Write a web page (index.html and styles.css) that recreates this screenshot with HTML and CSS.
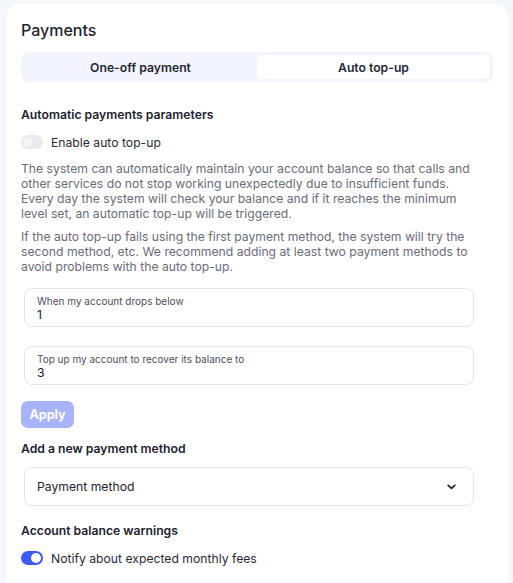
FILE: index.html
```html
<!DOCTYPE html>
<html lang="en">
<head>
<meta charset="utf-8">
<title>Payments</title>
<link rel="stylesheet" href="styles.css">
</head>
<body>
<div class="card">
  <h1 class="title">Payments</h1>
  <div class="tabs">
    <div class="tab">One-off payment</div>
    <div class="tab active">Auto top-up</div>
  </div>

  <h2 class="heading h-first">Automatic payments parameters</h2>
  <label class="toggle-row">
    <span class="toggle"><span class="knob"></span></span>
    <span>Enable auto top-up</span>
  </label>
  <p class="para p1">The system can automatically maintain your account balance so that calls and other services do not stop working unexpectedly due to insufficient funds. Every day the system will check your balance and if it reaches the minimum level set, an automatic top-up will be triggered.</p>
  <p class="para p2">If the auto top-up fails using the first payment method, the system will try the second method, etc. We recommend adding at least two payment methods to avoid problems with the auto top-up.</p>

  <div class="field f1">
    <div class="field-label">When my account drops below</div>
    <div class="field-value">1</div>
  </div>
  <div class="field f2">
    <div class="field-label">Top up my account to recover its balance to</div>
    <div class="field-value">3</div>
  </div>
  <button class="apply">Apply</button>

  <h2 class="heading h-method">Add a new payment method</h2>
  <div class="select">
    <span>Payment method</span>
    <svg class="chev" width="9" height="6" viewBox="0 0 9 6"><path d="M1.2 1.3 L4.5 4.4 L7.8 1.3" fill="none" stroke="#1f2030" stroke-width="1.7" stroke-linecap="round" stroke-linejoin="round"/></svg>
  </div>

  <h2 class="heading h-warn">Account balance warnings</h2>
  <label class="toggle-row">
    <span class="toggle on"><span class="knob"></span></span>
    <span>Notify about expected monthly fees</span>
  </label>
</div>
</body>
</html>
```

FILE: styles.css
```css
* { box-sizing: border-box; }
html, body { margin: 0; padding: 0; }
body {
  background: #f6f7fd;
  font-family: Inter, "Noto Sans", sans-serif;
  color: #23232f;
  height: 583px;
  overflow: hidden;
}
.card {
  background: #ffffff;
  margin: 4px 5px 0 6px;
  padding: 16px 15px 40px 15px;
  border-radius: 14px;
  min-height: 600px;
}
.title {
  margin: 0;
  font-size: 16px;
  line-height: 21px;
  font-weight: 500;
  color: #1f1f2b;
}
.tabs {
  margin-top: 11px;
  display: grid;
  grid-template-columns: 1fr 1fr;
  background: #f3f4fd;
  border-radius: 8px;
  padding: 3px;
  height: 30px;
}
.tab {
  display: flex;
  align-items: center;
  justify-content: center;
  font-size: 12.2px;
  font-weight: 600;
  color: #262633;
  border-radius: 6px;
}
.tab.active { background: #ffffff; }
.heading {
  margin: 0;
  font-size: 12.2px;
  line-height: 18px;
  font-weight: 600;
  color: #22222e;
}
.h-first { margin-top: 24px; }
.h-method { margin-top: 12px; }
.h-warn { margin-top: 16px; }
.toggle-row {
  display: flex;
  align-items: center;
  gap: 8px;
  height: 18px;
  margin-top: 9px;
  font-size: 12.2px;
  color: #2a2a36;
}
.toggle {
  width: 22px;
  height: 14px;
  border-radius: 7px;
  background: #e9e9ee;
  position: relative;
  flex: none;
}
.toggle .knob {
  position: absolute;
  top: 2px;
  left: 2px;
  width: 10px;
  height: 10px;
  border-radius: 50%;
  background: #f4f4f6;
}
.toggle.on { background: #3d5bf2; }
.toggle.on .knob { left: 10px; background: #ffffff; }
.para {
  margin: 0;
  max-width: 461px;
  font-size: 12.2px;
  line-height: 15px;
  color: #6c6b7a;
}
.p1 { margin-top: 10px; }
.p2 { margin-top: 8px; }
.field {
  width: 450px;
  margin-left: 3px;
  height: 39px;
  border: 1px solid #e6e6ea;
  border-radius: 8px;
  padding: 6px 12px 0 12px;
}
.f1 { margin-top: 14px; }
.f2 { margin-top: 19px; }
.field-label {
  font-size: 10px;
  line-height: 12px;
  color: #4e4e5c;
}
.field-value {
  font-size: 12.2px;
  line-height: 16px;
  color: #1a1a22;
}
.apply {
  display: block;
  margin-top: 16px;
  width: 53px;
  height: 27px;
  border: none;
  border-radius: 7px;
  background: #a7b4fa;
  color: #ffffff;
  font-family: inherit;
  font-size: 12.5px;
  font-weight: 700;
  padding: 0;
}
.select {
  margin-top: 9px;
  margin-left: 3px;
  width: 450px;
  height: 39px;
  border: 1px solid #e6e6ea;
  border-radius: 8px;
  padding: 0 17px 0 12px;
  display: flex;
  align-items: center;
  justify-content: space-between;
  font-size: 12.2px;
  color: #23232f;
}
.chev { display: block; }
```
